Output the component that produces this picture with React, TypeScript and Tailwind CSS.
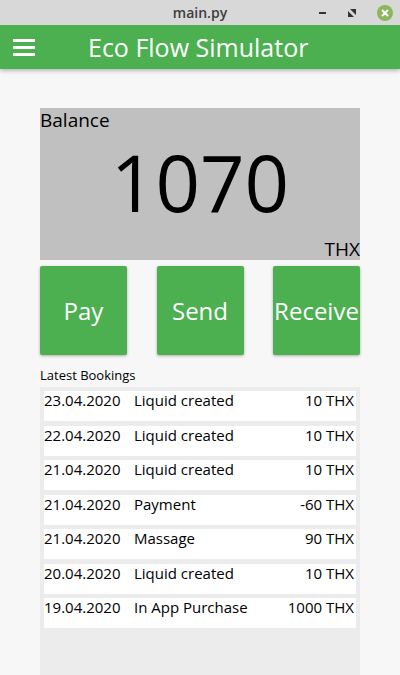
import React from "react";

const bookings = [
  { date: "23.04.2020", text: "Liquid created", amount: "10 THX" },
  { date: "22.04.2020", text: "Liquid created", amount: "10 THX" },
  { date: "21.04.2020", text: "Liquid created", amount: "10 THX" },
  { date: "21.04.2020", text: "Payment", amount: "-60 THX" },
  { date: "21.04.2020", text: "Massage", amount: "90 THX" },
  { date: "20.04.2020", text: "Liquid created", amount: "10 THX" },
  { date: "19.04.2020", text: "In App Purchase", amount: "1000 THX" },
];

const TitleBar = () => (
  <div className="relative flex h-[25px] items-center justify-center bg-[#d8d8d8]">
    <span className="text-[14px] font-semibold text-[#3d3d3d]">main.py</span>
    <div className="absolute right-0 top-0 flex h-[25px] items-center">
      <div className="mr-[22px] h-[2px] w-[7px] bg-[#333]" />
      <svg width="8" height="8" viewBox="0 0 8 8" className="mr-[21px]">
        <path d="M2 0h6v6z M0 2v6h6z" fill="#333" />
      </svg>
      <div className="mr-[7px] flex h-[16px] w-[16px] items-center justify-center rounded-full bg-[#8cb65e]">
        <svg width="8" height="8" viewBox="0 0 8 8">
          <path d="M1 1L7 7M7 1L1 7" stroke="#fff" strokeWidth="2" />
        </svg>
      </div>
    </div>
  </div>
);

const Header = () => (
  <div className="flex h-[44px] items-center bg-[#4caf50] shadow-[0_2px_4px_rgba(0,0,0,0.25)]">
    <div className="ml-[13px] flex w-[22px] flex-col gap-[4px]">
      <div className="h-[3px] bg-white" />
      <div className="h-[3px] bg-white" />
      <div className="h-[3px] bg-white" />
    </div>
    <h1 className="ml-[53px] text-[25px] leading-none text-white">Eco Flow Simulator</h1>
  </div>
);

const ActionButton = ({ label }: { label: string }) => (
  <button className="flex h-[89px] w-[87px] items-center justify-center rounded-[2px] bg-[#4caf50] text-[24px] text-white shadow-[0_1px_3px_rgba(0,0,0,0.3)]">
    {label}
  </button>
);

export default function App() {
  return (
    <div
      className="flex h-[675px] w-[400px] flex-col overflow-hidden bg-[#f7f7f7]"
      style={{ fontFamily: "'Open Sans', 'DejaVu Sans', sans-serif" }}
    >
      <TitleBar />
      <Header />
      <div className="flex flex-1 flex-col px-[40px] pt-[39px]">
        <div className="flex h-[152px] flex-col bg-[#c0c0c0] text-black">
          <div className="text-[19px] leading-[24px]">Balance</div>
          <div className="flex flex-1 items-center justify-center pb-[6px] text-[78px] leading-none">1070</div>
          <div className="self-end text-[19px] leading-[22px]">THX</div>
        </div>
        <div className="mt-[6px] flex justify-between">
          <ActionButton label="Pay" />
          <ActionButton label="Send" />
          <ActionButton label="Receive" />
        </div>
        <div className="mt-[12px] text-[13px] leading-[17px] text-black">Latest Bookings</div>
        <div className="mt-[3px] flex flex-1 flex-col gap-[4.5px] bg-[#ececec] px-[4px] pt-[4px]">
          {bookings.map((b, i) => (
            <div key={i} className="flex h-[30px] items-start bg-white text-[15px] leading-[18px] text-black">
              <span className="w-[90px] shrink-0">{b.date}</span>
              <span className="flex-1">{b.text}</span>
              <span className="pr-[2px]">{b.amount}</span>
            </div>
          ))}
        </div>
      </div>
    </div>
  );
}
